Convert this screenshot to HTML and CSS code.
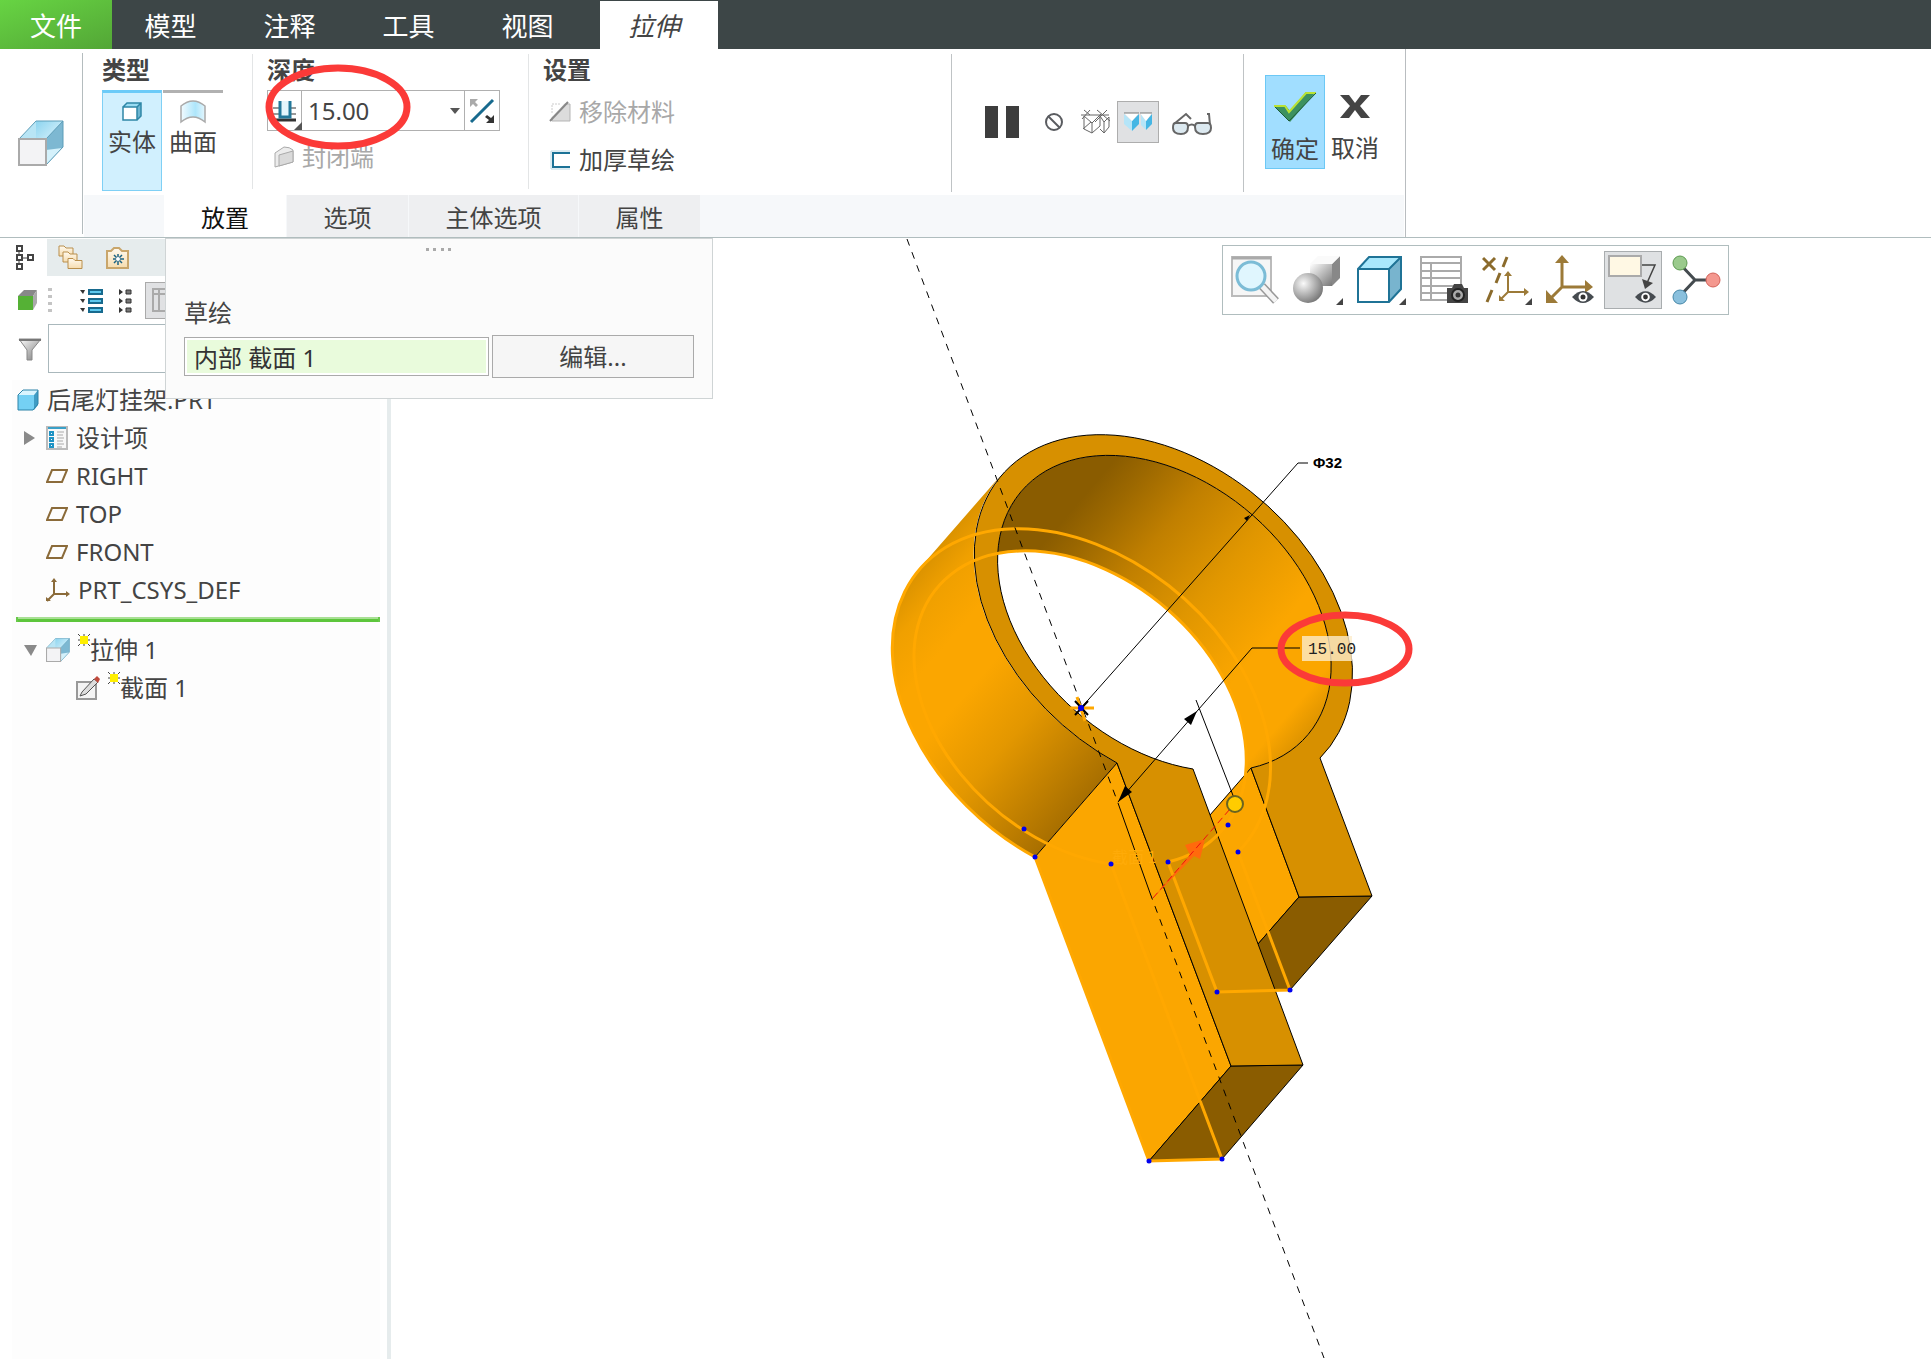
FILE: index.html
```html
<!DOCTYPE html>
<html lang="zh-CN">
<head>
<meta charset="utf-8">
<meta name="viewport" content="width=device-width, initial-scale=1">
<title>拉伸</title>
<link rel="stylesheet" href="styles.css">
</head>
<body>
<svg class="defs" width="0" height="0" aria-hidden="true">
  <defs>
    <linearGradient id="glass" x1="0" y1="0" x2="1" y2="1"><stop offset="0" stop-color="#8cd4ef"/><stop offset="1" stop-color="#eefaff"/></linearGradient>
    <linearGradient id="sheet" x1="0" y1="0" x2="1" y2="0"><stop offset="0" stop-color="#f2fbff"/><stop offset=".6" stop-color="#aee6fb"/><stop offset="1" stop-color="#e3f6fd"/></linearGradient>
    <linearGradient id="folder" x1="0" y1="0" x2="0" y2="1"><stop offset="0" stop-color="#fffaf0"/><stop offset="1" stop-color="#f6dcae"/></linearGradient>
    <radialGradient id="ball" cx=".35" cy=".35" r=".7"><stop offset="0" stop-color="#fafafa"/><stop offset="1" stop-color="#777"/></radialGradient>
    <linearGradient id="block" x1="0" y1="0" x2="1" y2="1"><stop offset="0" stop-color="#fff"/><stop offset="1" stop-color="#777"/></linearGradient>
    <symbol id="i-extrude" viewBox="0 0 46 46">
      <path d="M1 19 18 1h27L28 19z" fill="#b8e5f5"/><path d="M18 1h27v26H18z" fill="url(#glass)"/>
      <path d="M28 19 45 1v26L28 45z" fill="#7db8d2"/><path d="M28 30l16-2-16 17z" fill="#d4f1fb"/>
      <path d="M18 1h27v26L28 45M18 1 1 19M45 1 28 19" fill="none" stroke="#5d9db8" stroke-width="1"/>
      <path d="M1 19h27v26H1z" fill="#f3f3f5" stroke="#aaa" stroke-width="2"/>
    </symbol>
    <symbol id="i-plane" viewBox="0 0 22 16"><path d="M6 2h15l-5 12H1z" fill="none" stroke="#8b6b3a" stroke-width="2"/></symbol>
    <symbol id="i-new" viewBox="0 0 12 12"><path d="M0 0l4 4M12 0 8 4M0 12l4-4M12 12 8 8M6 0v3M6 9v3M0 6h3M9 6h3" stroke="#444" stroke-width="1"/><path d="M2 2h8v8H2z" fill="#ffef00"/></symbol>
    <symbol id="i-eye" viewBox="0 0 22 14"><path d="M0 7Q11-5 22 7 11 19 0 7z" fill="#464b50"/><circle cx="11" cy="7" r="4.500" fill="#fff"/><circle cx="11" cy="7" r="2.500" fill="#333"/></symbol>
    <symbol id="i-folder" viewBox="0 0 16 12"><path d="M1 11V1h5l2 2h7v8z" fill="url(#folder)" stroke="#b98f4c"/></symbol>
  </defs>
</svg>

<header class="menubar">
  <nav class="menu" aria-label="主菜单">
    <a class="menu-item menu-file" href="#">文件</a>
    <a class="menu-item" href="#">模型</a>
    <a class="menu-item" href="#">注释</a>
    <a class="menu-item" href="#">工具</a>
    <a class="menu-item" href="#">视图</a>
    <a class="menu-item menu-active" href="#" aria-current="page">拉伸</a>
  </nav>
</header>

<section class="ribbon">
  <div class="ribbon-icon"><svg width="46" height="46"><use href="#i-extrude"/></svg></div>
  <div class="ribbon-body">
    <div class="groups">
      <div class="group group-type">
        <h2 class="group-title">类型</h2>
        <div class="type-row">
          <button class="type-btn type-on" type="button">
            <svg width="22" height="22" viewBox="0 0 22 22"><path d="M2 6 6 2h14l-4 4z" fill="#9adcf2"/><path d="M16 6l4-4v13l-4 4z" fill="#6db5d0"/><path d="M2 6h14v13H2z" fill="#fff"/><path d="M2 6h14v13H2zM2 6l4-4h14v13l-4 4M16 6l4-4" fill="none" stroke="#2f87a6" stroke-width="1.500"/></svg>
            <span>实体</span>
          </button>
          <button class="type-btn" type="button">
            <svg width="26" height="24" viewBox="0 0 26 24"><path d="M1 22V6Q13-4 25 6v16Q13 12 1 22z" fill="url(#sheet)" stroke="#aaa" stroke-width="1.500"/></svg>
            <span>曲面</span>
          </button>
        </div>
      </div>
      <div class="group group-depth">
        <h2 class="group-title">深度</h2>
        <div class="depth-box">
          <button class="depth-mode" type="button" aria-label="深度类型">
            <svg width="34" height="40" viewBox="0 0 34 40"><path d="M5 17h7M5 23h7M22 17h6M22 23h6" stroke="#999" stroke-width="2"/><path d="M6 29h22" stroke="#333" stroke-width="3"/><path d="M12 10v16h10V10" fill="#e4f6fc" stroke="#22789a" stroke-width="3"/><path d="M34 31v8h-8z" fill="#555"/></svg>
          </button>
          <input class="depth-value" type="text" value="15.00" aria-label="深度值">
          <button class="depth-drop" type="button" aria-label="展开"><svg width="10" height="6"><path d="M0 0h10L5 6z" fill="#555"/></svg></button>
          <button class="depth-flip" type="button" aria-label="反向">
            <svg width="26" height="26" viewBox="0 0 26 26"><path d="M2 24 24 2" stroke="#176a8e" stroke-width="3"/><path d="M1 9V1h8L6 4l3 3-2 2-3-3z" fill="#aaa"/><path d="M25 17v8h-8l3-3-4-3 2-2 4 3z" fill="#333"/></svg>
          </button>
        </div>
        <button class="opt opt-off opt-cap" type="button" disabled>
          <svg width="22" height="22" viewBox="0 0 22 22"><path d="M2 7 11 1q6 0 9 3v12L2 21z" fill="#ececec" stroke="#aaa"/><path d="M6 9l14-4v11L6 20z" fill="#dadada" stroke="#aaa"/></svg>
          <span>封闭端</span>
        </button>
        <svg class="mark" width="148" height="86" viewBox="0 0 148 86"><ellipse cx="74" cy="43" rx="69" ry="39" fill="none" stroke="#fb3a38" stroke-width="7"/></svg>
      </div>
      <div class="group group-set">
        <h2 class="group-title">设置</h2>
        <button class="opt opt-off" type="button" disabled>
          <svg width="22" height="22" viewBox="0 0 22 22"><path d="M3 3h18v17H3z" fill="#dcdcdc" stroke="#b5b5b5"/><path d="M0 19V0h18z" fill="#fff"/><path d="M3 12V3h9" fill="none" stroke="#ccc" stroke-dasharray="2 1"/><path d="M1 20 19 1" stroke="#888" stroke-width="2"/></svg>
          <span>移除材料</span>
        </button>
        <button class="opt" type="button">
          <svg width="22" height="22" viewBox="0 0 22 22"><path d="M21 4H4v14h17" fill="none" stroke="#1c7296" stroke-width="2"/><path d="M21 2H2v18h19" fill="none" stroke="#b9d8e4" stroke-width="1"/></svg>
          <span>加厚草绘</span>
        </button>
      </div>
      <div class="group group-play">
        <button class="tool t-pause" type="button" aria-label="暂停"><svg width="34" height="34"><path d="M0 1h13v32H0zM21 1h13v32H21z" fill="#3d3d3d"/></svg></button>
        <button class="tool" type="button" aria-label="无预览"><svg width="20" height="20" viewBox="0 0 20 20"><circle cx="10" cy="10" r="8" fill="none" stroke="#5a5c60" stroke-width="2"/><path d="M4 4l12 12" stroke="#5a5c60" stroke-width="2"/></svg></button>
        <button class="tool" type="button" aria-label="未附着预览"><svg width="30" height="26" viewBox="0 0 30 26"><path d="M0 6h28M3 7v13l8 4 8-7V6M11 24V14L3 7M11 14l9-9M3 1l6 5M9 1 1 10M26 1 14 13M16 1l13 11M28 8l-5 5v11l-4-4M23 13l-4-6M28 8v10l-5 6M2 20l8-7" fill="none" stroke="#666" stroke-width="1"/></svg></button>
        <button class="tool tool-on" type="button" aria-label="附着预览"><svg width="28" height="20" viewBox="0 0 28 20"><path d="M0 2 8 9v10L0 12z" fill="#b5e5f8"/><path d="M8 9l7-7v10L8 19z" fill="#45b6e4"/><path d="M17 2l5 7v9l-5-5z" fill="#b5e5f8"/><path d="M22 9l6-7v10l-6 6z" fill="#45b6e4"/><path d="M0 1h15L8 9zM16 1h12l-6 8z" fill="#fff"/><path d="M0 1h15M16 1h12" stroke="#777"/></svg></button>
        <button class="tool" type="button" aria-label="验证"><svg width="40" height="24" viewBox="0 0 40 24"><path d="M3 11h10q3 0 3 4 0 7-7 7-8 0-8-6 0-5 2-5zM26 11h10q3 0 3 5 0 6-8 6t-8-7q0-4 3-4z" fill="#dce9f0" stroke="#666" stroke-width="2"/><path d="M2 12 14 2l5 5M16 14q4-3 7 0M38 13 37 2h-2" fill="none" stroke="#666" stroke-width="2"/></svg></button>
      </div>
      <div class="group group-confirm">
        <button class="done done-on" type="button">
          <svg width="44" height="32" viewBox="0 0 44 32"><path d="M1 15h12l4 5L33 1h10L17 31z" fill="#3c9160"/><path d="M1 15h11l4 6L33 2h10" fill="none" stroke="#b9e234" stroke-width="2"/><path d="M43 2 16 30 2 16" fill="none" stroke="#1d5c38" stroke-width="1"/></svg>
          <span>确定</span>
        </button>
        <button class="done" type="button">
          <svg width="44" height="32" viewBox="0 0 44 32"><path d="M7 5h9l6 8 6-8h9L27 16l10 12h-9l-6-8-6 8H7l10-12z" fill="#444"/></svg>
          <span>取消</span>
        </button>
      </div>
    </div>
    <nav class="subtabs" aria-label="选项卡">
      <a class="subtab subtab-on" href="#">放置</a>
      <a class="subtab" href="#">选项</a>
      <a class="subtab subtab-wide" href="#">主体选项</a>
      <a class="subtab" href="#">属性</a>
    </nav>
  </div>
</section>

<main class="work">
  <aside class="side">
    <div class="side-tabs">
      <button class="side-tab side-tab-on" type="button" aria-label="模型树"><svg width="18" height="26" viewBox="0 0 18 26"><path d="M3 6v14M5 13h7" stroke="#444" stroke-width="1"/><path d="M1 1h5v5H1zM1 10h5v5H1zM12 10h5v5h-5zM1 19h5v5H1z" fill="#fff" stroke="#444" stroke-width="2"/></svg></button>
      <button class="side-tab" type="button" aria-label="文件夹浏览器"><svg width="26" height="26" viewBox="0 0 26 26"><use href="#i-folder" width="16" height="12"/><use href="#i-folder" x="4" y="6" width="16" height="12"/><use href="#i-folder" x="9" y="12" width="16" height="13"/></svg></button>
      <button class="side-tab" type="button" aria-label="收藏夹"><svg width="24" height="24" viewBox="0 0 24 24"><path d="M1 22V5h4l3-3h5l3 3h6v17z" fill="url(#folder)" stroke="#c9a66b" stroke-width="2"/><path d="M12 8v11M7 13h11M8 9l8 8M16 9l-8 8" stroke="#1b6384" stroke-width="1.500"/><circle cx="12" cy="13" r="2" fill="#fff"/></svg></button>
    </div>
    <div class="side-tools">
      <svg width="20" height="20" viewBox="0 0 20 20"><path d="M0 6 6 0h13l-4 6z" fill="#888"/><path d="M15 6l4-6v13l-4 7z" fill="#aaa"/><path d="M0 6h15v14H0z" fill="#55b135"/></svg>
      <svg class="grip" width="4" height="24"><path d="M0 0h4v3H0zM0 7h4v3H0zM0 14h4v3H0zM0 21h4v3H0z" fill="#c4c4c4"/></svg>
      <svg class="st-expand" width="23" height="25" viewBox="0 0 23 25"><path d="M9 2h13v4H9zM9 11h13v4H9zM9 20h13v4H9z" fill="#5cc8ee" stroke="#176a8e" stroke-width="2"/><path d="M0 2h5L3 6zM0 11h5l-2 4zM0 20h5l-2 4z" fill="#333"/></svg>
      <svg class="st-collapse" width="13" height="25" viewBox="0 0 13 25"><path d="M7 2h5v4H7zM7 11h5v4H7zM7 20h5v4H7z" fill="#777" stroke="#333"/><path d="M0 1l4 3-4 3zM0 10l4 3-4 3zM0 19l4 3-4 3z" fill="#333"/></svg>
      <button class="st-cols" type="button" aria-label="树列"><svg width="28" height="24"><path d="M1 1h26v22H1zM1 6h26M7 1v22M14 1v22" fill="none" stroke="#aaa" stroke-width="2"/></svg></button>
    </div>
    <div class="side-filter">
      <svg width="24" height="24" viewBox="0 0 24 24"><path d="M1 2h22L14 13v10H9V13z" fill="url(#block)" stroke="#888"/><path d="M1 2h22v2H1z" fill="#777"/></svg>
      <input class="filter-input" type="text" aria-label="过滤">
    </div>
    <ul class="tree">
      <li class="node lvl0"><svg width="22" height="22" viewBox="0 0 22 22"><path d="M1 6 6 1h15l-4 5z" fill="#d9f4fe"/><path d="M17 6l4-5v15l-4 5z" fill="#3f9cc4"/><path d="M1 6h16v15H1z" fill="#74d0f4"/><path d="M1 6 6 1h15v14l-5 6H1z" fill="none" stroke="#2d83a8"/></svg><span>后尾灯挂架.PRT</span></li>
      <li class="node lvl1"><svg class="arrow" width="12" height="14"><path d="M0 0l11 7-11 7z" fill="#8a8a8a"/></svg><svg width="22" height="24" viewBox="0 0 22 24"><path d="M1 1h20v22H1z" fill="#f8f8f8" stroke="#bbb" stroke-width="2"/><path d="M2 2h18" stroke="#3aa0c8" stroke-width="2"/><path d="M4 6h3v3H4zM4 12h3v3H4zM4 18h3v3H4z" fill="none" stroke="#1f93c4" stroke-width="2"/><path d="M11 6h7M11 9h6M11 12h7M11 15h6M11 18h7M11 21h5" stroke="#aaa" stroke-width="1"/></svg><span>设计项</span></li>
      <li class="node lvl1 leaf"><svg width="22" height="16"><use href="#i-plane"/></svg><span>RIGHT</span></li>
      <li class="node lvl1 leaf"><svg width="22" height="16"><use href="#i-plane"/></svg><span>TOP</span></li>
      <li class="node lvl1 leaf"><svg width="22" height="16"><use href="#i-plane"/></svg><span>FRONT</span></li>
      <li class="node lvl1 leaf"><svg width="24" height="24" viewBox="0 0 24 24"><path d="M8 2v14h14M8 16l-7 7" fill="none" stroke="#8b6b3a" stroke-width="2"/><path d="M5 4l3-4 3 4zM20 13l4 3-4 3zM0 19l5 4H0z" fill="#8b6b3a"/></svg><span>PRT_CSYS_DEF</span></li>
      <li class="insert" aria-hidden="true"></li>
      <li class="node lvl1"><svg class="arrow" width="14" height="11"><path d="M0 0h13L7 11z" fill="#8a8a8a"/></svg><svg width="24" height="24"><use href="#i-extrude"/></svg><span class="fresh"><svg width="12" height="12"><use href="#i-new"/></svg>拉伸 1</span></li>
      <li class="node lvl2"><svg width="24" height="24" viewBox="0 0 24 24"><path d="M1 6h19v17H1z" fill="#f4f4f4" stroke="#999" stroke-width="2"/><path d="M6 16 18 3l4 3L10 18l-6 2z" fill="#ddd" stroke="#555"/><path d="M18 3l3-3 3 3-2 4z" fill="#c04a3c"/></svg><span class="fresh"><svg width="12" height="12"><use href="#i-new"/></svg>截面 1</span></li>
    </ul>
  </aside>

  <section class="canvas">
    <svg class="model" viewBox="391 238 1540 1120" preserveAspectRatio="xMinYMin meet" role="img" aria-label="后尾灯挂架">
      <defs>
        <linearGradient id="shell" gradientUnits="userSpaceOnUse" x1="1001" y1="474" x2="1210" y2="653"><stop offset="0" stop-color="#dc9300"/><stop offset=".1" stop-color="#f0a000"/><stop offset=".25" stop-color="#fba600"/><stop offset=".42" stop-color="#fba600"/><stop offset=".65" stop-color="#e39700"/><stop offset="1" stop-color="#a86f00"/></linearGradient>
        <linearGradient id="bore" gradientUnits="userSpaceOnUse" x1="1019" y1="490" x2="1305" y2="734"><stop offset="0" stop-color="#8a5c00"/><stop offset=".14" stop-color="#8a5c00"/><stop offset=".22" stop-color="#9c6800"/><stop offset=".36" stop-color="#c07f00"/><stop offset=".55" stop-color="#e09600"/><stop offset=".76" stop-color="#fba600"/><stop offset=".93" stop-color="#fba600"/><stop offset="1" stop-color="#e09500"/></linearGradient>
        <clipPath id="opening"><path d="M1251 767A188 132 40.400 1 0 1193 768L1210 814z"/></clipPath>
      </defs>
      <path d="M1251 767A188 132 40.400 1 0 1193 768L1210 814z" fill="url(#bore)"/>
      <g clip-path="url(#opening)"><path d="M1111 863A187 132 40.400 1 1 1168 861z" fill="#fff"/></g>
      <path d="M1001 474 919 568A213 150 40.400 0 0 1035 856L1117 762A213 150 40.400 0 1 1001 474z" fill="url(#shell)"/>
      <path d="M1251 767l48 129-82 94-48-129z" fill="#fba600" stroke="#000"/>
      <path d="M1299 896l73-1-82 94-73 1z" fill="#8a5c00" stroke="#000"/>
      <path d="M1117 762l114 303-82 95-114-304z" fill="#fba600" stroke="#000"/>
      <path d="M1231 1065l72-1-81 94-73 2z" fill="#8a5c00" stroke="#000"/>
      <path d="M1117 762A213 150 40.400 1 1 1320 757L1372 895l-73 1-48-129A188 132 40.400 1 0 1193 768L1303 1064l-72 1z" fill="#d79000" stroke="#000"/>
      <g fill="none" stroke="#ffa800" stroke-width="3">
        <path d="M1238 851A213 150 40.400 1 0 1035 856L1149 1160l73-2-111-295"/>
        <path d="M1111 863A187 132 40.400 1 1 1168 861L1217 991l73-2-52-138"/>
      </g>
      <g fill="none" stroke="#000">
        <path d="M907 238 1118 802M1150 892 1324 1357" stroke-dasharray="7 7"/>
        <path d="M1118 802l32 90M1081 707 1298 462h10M1118 801 1252 647h48M1196 699l38 98"/>
      </g>
      <path d="M1118 801l7-16 7 6zM1197 710l-13 8 7 6zM1250 514l-6 3 3 3z"/>
      <path d="M1070 707h24M1077 696l8 24" stroke="#ffa800" stroke-width="3"/>
      <path d="M1075 700l13 14M1088 700l-13 14" stroke="#000" stroke-width="2"/>
      <text class="sketch-name" x="1112" y="862">截面 1</text>
      <path d="M1153 897l37-43-5-10 20-6-5 20-6-3z" fill="#ff6a0c"/>
      <path d="M1153 897 1230 808" stroke="#e11" stroke-dasharray="7 4"/>
      <g fill="#00e"><circle cx="1081" cy="707" r="3"/><circle cx="1024" cy="828" r="2.500"/><circle cx="1035" cy="856" r="2.500"/><circle cx="1111" cy="863" r="2.500"/><circle cx="1168" cy="861" r="2.500"/><circle cx="1228" cy="824" r="2.500"/><circle cx="1238" cy="851" r="2.500"/><circle cx="1217" cy="991" r="2.500"/><circle cx="1290" cy="989" r="2.500"/><circle cx="1149" cy="1160" r="2.500"/><circle cx="1222" cy="1158" r="2.500"/></g>
      <circle cx="1235" cy="803" r="8" fill="#fc0" stroke="#6b6420" stroke-width="2"/>
      <text class="dim dim-bold" x="1313" y="467">Φ32</text>
      <path d="M1302 635h50v25h-50z" fill="#fdeccb" fill-opacity=".8"/>
      <text class="dim" x="1308" y="653">15.00</text>
      <ellipse cx="1345" cy="648" rx="64" ry="34" fill="none" stroke="#fb3a38" stroke-width="7"/>
    </svg>

    <div class="viewbar" role="toolbar" aria-label="图形工具栏">
      <button class="vb" type="button" aria-label="重新调整"><svg width="50" height="50" viewBox="0 0 50 50"><path d="M2 2h39v39H2z" fill="#f6f6f6" stroke="#bbb" stroke-width="2"/><path d="M2 3h39" stroke="#aaa" stroke-width="3"/><path d="M32 31l14 15" stroke="#999" stroke-width="8"/><path d="M32 31l14 15" stroke="#f4f4f4" stroke-width="5"/><circle cx="21" cy="21" r="14" fill="#e0f6fe" stroke="#7cbcd6" stroke-width="3"/></svg></button>
      <button class="vb" type="button" aria-label="显示样式"><svg width="50" height="50" viewBox="0 0 50 50"><path d="M17 9h22v22H17z" fill="url(#block)"/><path d="M39 9l8-8v22l-8 8z" fill="#888"/><path d="M17 9l8-8h22l-8 8z" fill="#fafafa"/><circle cx="15" cy="33" r="15" fill="url(#ball)"/><path d="M50 43v7h-7z" fill="#444"/></svg></button>
      <button class="vb" type="button" aria-label="已保存方向"><svg width="50" height="50" viewBox="0 0 50 50"><path d="M2 14 13 2h32L33 14z" fill="#a9e8fc"/><path d="M33 14 45 2v32L33 47z" fill="#78b4ce"/><path d="M2 14h31v33H2z" fill="#fff"/><path d="M2 14 13 2h32v32L33 47H2zM2 14h31v33M33 14 45 2" fill="none" stroke="#1f7396" stroke-width="2"/><path d="M50 43v7h-7z" fill="#444"/></svg></button>
      <button class="vb" type="button" aria-label="视图管理器"><svg width="50" height="50" viewBox="0 0 50 50"><path d="M2 2h40v43H2z" fill="#fff"/><path d="M2 2h40v43H2zM2 8h40M2 16h40M2 23h40M2 31h40M2 38h40M12 8v37" fill="none" stroke="#aaa" stroke-width="2"/><path d="M28 33h5l2-4h8l2 4h4v15H28z" fill="#444"/><circle cx="39" cy="40" r="6" fill="#aaa" stroke="#222" stroke-width="2"/><circle cx="39" cy="40" r="2.500" fill="#333"/></svg></button>
      <button class="vb" type="button" aria-label="基准显示过滤器"><svg width="50" height="50" viewBox="0 0 50 50"><path d="M1 3l12 12M13 3 1 15M25 2l-4 10M18 18l-4 10M10 35 5 47" stroke="#8b6b2c" stroke-width="3"/><path d="M26 20v17h18M26 37l-8 8" fill="none" stroke="#9c7a38" stroke-width="2"/><path d="M22 21l4-5 4 5zM42 33l5 4-5 4zM17 40l6 6h-6z" fill="#9c7a38"/><path d="M50 43v7h-7z" fill="#444"/></svg></button>
      <button class="vb" type="button" aria-label="坐标系显示"><svg width="50" height="50" viewBox="0 0 50 50"><path d="M17 6v26h24M17 32 5 44" fill="none" stroke="#9c7a38" stroke-width="3"/><path d="M10 8l7-8 7 8zM40 25l8 7-8 6zM1 35l12 13H1z" fill="#9c7a38"/><use href="#i-eye" x="27" y="35" width="22" height="14"/></svg></button>
      <button class="vb vb-on" type="button" aria-label="注释显示"><svg width="50" height="50" viewBox="0 0 50 50"><path d="M1 1h32v20H1z" fill="#fff8e4" stroke="#aaa" stroke-width="2"/><path d="M34 10h13l-8 18" fill="none" stroke="#444" stroke-width="1.500"/><path d="M34 24l11 4-8 6z" fill="#444"/><use href="#i-eye" x="27" y="35" width="21" height="14"/></svg></button>
      <button class="vb" type="button" aria-label="旋转中心"><svg width="50" height="50" viewBox="0 0 50 50"><path d="M8 8l16 17L8 42M24 25h18" fill="none" stroke="#444b4f" stroke-width="3"/><circle cx="9" cy="8" r="7" fill="#9aca8c" stroke="#5d9a50"/><circle cx="42" cy="25" r="7" fill="#f4988f" stroke="#d36259"/><circle cx="9" cy="42" r="7" fill="#8ac0dd" stroke="#4587a8"/></svg></button>
    </div>
  </section>

  <form class="panel">
    <svg class="panel-grip" width="26" height="4" aria-hidden="true"><path d="M0 0h3v3H0zM7 0h3v3H7zM15 0h3v3h-3zM22 0h3v3h-3z" fill="#aaa"/></svg>
    <label class="panel-label" for="sketch">草绘</label>
    <div class="panel-row">
      <input class="sketch-input" id="sketch" type="text" value="内部 截面 1">
      <button class="edit-btn" type="button">编辑...</button>
    </div>
  </form>
</main>
</body>
</html>
```
FILE: styles.css
```css
* { box-sizing: border-box; }
body {
  margin: 0;
  min-height: 100vh;
  display: flex;
  flex-direction: column;
  background: #fff;
  color: #444;
  font: 24px/32px "Noto Sans", "Noto Sans CJK SC", sans-serif;
}
button, input { margin: 0; padding: 0; border: 0; border-radius: 0; background: none; color: inherit; font: inherit; }
a { color: inherit; text-decoration: none; }
svg { display: block; flex: none; }
.defs { position: absolute; }

.menubar { background: #3d4647; }
.menu { display: flex; height: 49px; color: #fff; font-size: 26px; }
.menu-item { width: 119px; display: flex; align-items: center; justify-content: center; padding: 2px 2px 0 0; }
.menu-file { width: 112px; padding-right: 0; background: linear-gradient(160deg, #67d443, #53a636); }
.menu-active { width: 118px; margin: 1px 0 0 12px; padding-right: 10px; background: #fff; color: #444; font-style: italic; }

.ribbon { display: flex; height: 189px; border-bottom: 1px solid #b0bdbe; }
.ribbon-icon { width: 83px; margin: 4px 0 3px; padding: 67px 0 0 18px; border-right: 1px solid #b4bcbe; }
.ribbon-body { width: 1323px; padding-left: 1px; border-right: 1px solid #b9bdc0; display: flex; flex-direction: column; }
.groups { flex: 1; display: flex; }
.group { position: relative; padding-top: 5px; }
.group-title { margin: 0 0 4px; font-size: 24px; line-height: 32px; font-weight: 700; color: #444; }
.group-type { width: 168px; padding-left: 18px; }
.group-depth { width: 276px; padding-left: 15px; }
.group-set { width: 423px; padding-left: 15px; }
.group-play { width: 292px; padding: 0 0 0 34px; display: flex; align-items: center; }
.group-confirm { flex: 1; padding: 26px 0 0 22px; display: flex; }
.group-depth::before, .group-set::before, .group-play::before, .group-confirm::before {
  content: ""; position: absolute; left: 0; top: 5px; bottom: 6px; width: 1px; background: #e3e5e6;
}
.group-play::before, .group-confirm::before { bottom: 3px; background: #bfc3c5; }

.type-row { display: flex; gap: 1px; }
.type-btn { width: 60px; height: 101px; padding-top: 7px; border-top: 3px solid #b1b1b1; display: flex; flex-direction: column; align-items: center; justify-content: flex-start; }
.type-btn svg { height: 24px; margin-bottom: 2px; }
.type-on { border: 1px solid #7fd0f5; border-top: 3px solid #6ccbf8; background: #d1f0fe; }

.depth-box { display: flex; width: 233px; height: 41px; border: 1px solid #b0b0b0; }
.depth-mode { width: 34px; border-right: 1px solid #b0b0b0; }
.depth-value { width: 120px; padding-left: 6px; outline: 0; }
.depth-drop { flex: 1; padding-left: 28px; }
.depth-flip { width: 35px; padding-left: 4px; border-left: 1px solid #b0b0b0; }
.opt { display: flex; align-items: center; gap: 8px; height: 48px; padding-left: 6px; }
.opt-off { color: #a8a8a8; }
.group-set .group-title { margin-bottom: 2px; }
.opt-cap { height: 52px; gap: 7px; }
.mark { position: absolute; left: 12px; top: 15px; }

.tool { height: 42px; padding: 0 6px; display: flex; align-items: center; }
.t-pause { padding: 0; margin-right: 19px; }
.group-play .tool:nth-child(3) { padding: 0 6px 0 11px; }
.tool-on { padding: 0 6px; border: 1px solid #adadad; background: #e0e1e3; }
.group-play .tool:nth-child(5) { padding: 4px 0 0 13px; }
.done { width: 60px; height: 94px; padding-top: 15px; display: flex; flex-direction: column; align-items: center; justify-content: flex-start; gap: 10px; }
.done-on { border: 1px solid #6cc8f5; background: #a1deff; }

.subtabs { display: flex; height: 42px; margin-right: 1px; padding-left: 80px; gap: 1px; background: #f6f8fa; }
.subtab { width: 121px; display: flex; align-items: center; justify-content: center; padding-top: 3px; background: #eeeff1; }
.subtab-on { width: 122px; background: #fff; color: #111; }
.subtab-wide { width: 169px; }

.work { position: relative; flex: 1; display: flex; }
.side { width: 391px; border-right: 4px solid #e6eced; padding-top: 1px; display: flex; flex-direction: column; }
.side-tabs { display: flex; height: 37px; background: #e6eced; }
.side-tab { width: 47px; display: flex; align-items: center; justify-content: center; }
.side-tab-on { padding-left: 3px; background: #fff; }
.side-tools { display: flex; align-items: center; height: 48px; padding-left: 18px; }
.grip { margin-left: 10px; }
.st-expand { margin-left: 28px; }
.st-collapse { margin-left: 16px; }
.st-cols { width: 37px; height: 37px; margin-left: 13px; padding-left: 6px; border: 1px solid #aaa; background: #e0e1e3; }
.side-filter { display: flex; align-items: center; gap: 6px; height: 49px; padding-left: 18px; }
.filter-input { flex: 1; min-width: 0; height: 49px; margin-right: 6px; border: 1px solid #aab8bc; }
.tree { flex: 1; list-style: none; margin: 7px 7px 0 12px; padding: 1px 0 0; background: #fdfdfd; }
.node { display: flex; align-items: center; height: 38px; gap: 8px; }
.lvl0 { padding-left: 5px; }
.lvl1 { padding-left: 12px; }
.leaf { padding-left: 34px; }
.lvl2 { padding-left: 64px; }
.arrow { width: 14px; }
.insert { height: 5px; margin: 8px 0 9px 4px; border: solid #68c84a; border-width: 0 2px; background: linear-gradient(#a8e094 2px, #5dc63c 2px); }
.fresh { display: flex; }

.canvas { position: relative; flex: 1; overflow: hidden; }
.model { position: absolute; inset: 1px 0 0 0; width: 100%; height: 100%; }
.dim { font: 16px "Liberation Mono", monospace; fill: #222; }
.dim-bold { font: 700 15px "Liberation Sans", sans-serif; fill: #000; }
.sketch-name { font: 16px "Noto Sans CJK SC", sans-serif; fill: #ffab08; }
.viewbar { position: absolute; left: 831px; top: 7px; display: flex; gap: 5px; padding: 5px 3px; border: 1px solid #b0bdbe; background: #fff; }
.vb { width: 58px; height: 58px; display: flex; align-items: center; justify-content: center; }
.vb-on { border: 1px solid #a9adaf; background: #dfe1e3; }

.panel { position: absolute; left: 165px; top: 0; width: 548px; height: 161px; padding: 9px 18px 0; border: 1px solid #cfd4d5; background: #fbfbfb; display: flex; flex-direction: column; }
.panel-grip { align-self: center; }
.panel-label { margin-top: 45px; }
.panel-row { display: flex; align-items: center; gap: 3px; margin-top: 6px; }
.sketch-input { flex: 1; min-width: 0; height: 39px; padding: 0 9px; border: 1px solid #aaa; background: #e9fbdc; box-shadow: inset 0 0 0 2px #fff; color: #333; }
.edit-btn { width: 202px; height: 43px; border: 1px solid #aaa; background: #f6f6f6; }
```
